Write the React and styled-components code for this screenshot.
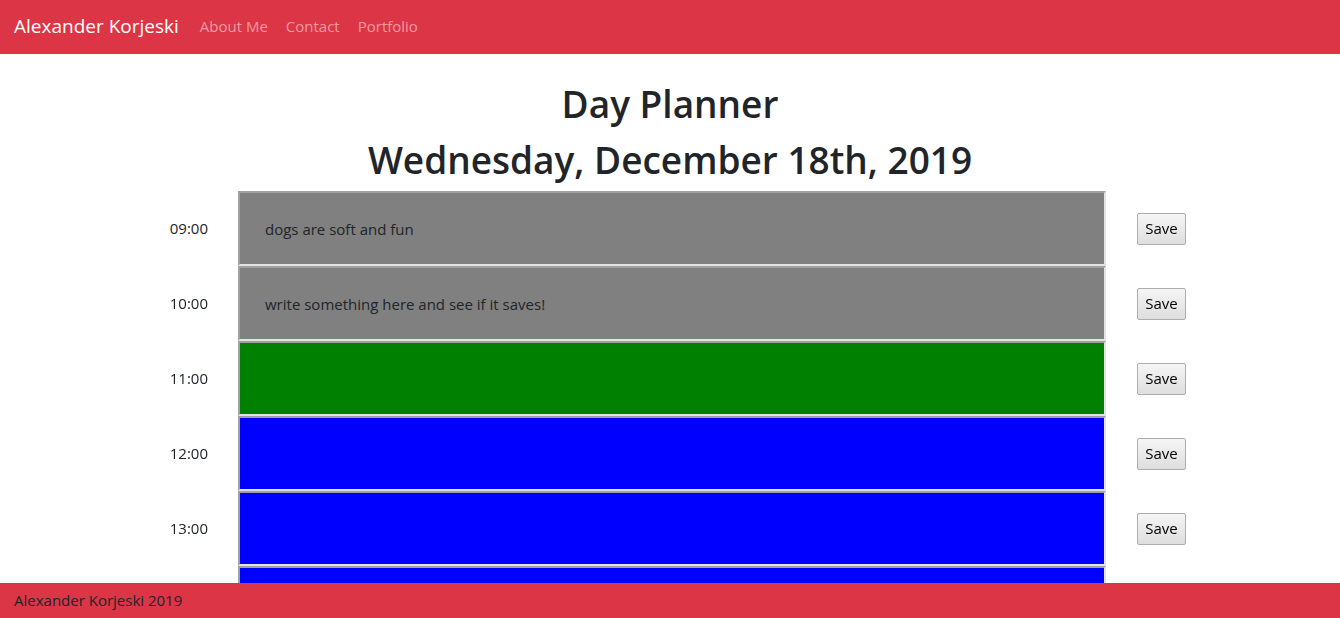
import React from "react";
import styled, { createGlobalStyle } from "styled-components";

const Global = createGlobalStyle`
  html, body { margin: 0; padding: 0; }
  body {
    font-family: "Open Sans", "Noto Sans", sans-serif;
    font-size: 16px;
    line-height: 1.5;
    color: #212529;
    background: #fff;
  }
  * { box-sizing: border-box; }
`;

const NavBar = styled.nav`
  display: flex;
  align-items: center;
  height: 54px;
  padding: 0 14px 2px;
  background: #dc3545;
`;

const Brand = styled.a`
  font-size: 19px;
  color: #fff;
  margin-right: 12px;
  text-decoration: none;
`;

const NavLink = styled.a`
  font-size: 15px;
  color: rgba(255, 255, 255, 0.5);
  padding: 0 9px;
  text-decoration: none;
`;

const Header = styled.header`
  display: flex;
  flex-direction: column;
  align-items: center;
  padding-top: 26px;
`;

const Title = styled.h1`
  margin: 0 0 8px;
  font-size: 37px;
  font-weight: 600;
  line-height: 48px;
  &:last-child { margin-bottom: 7px; }
`;

const Planner = styled.main`
  width: 1140px;
  margin: 0 auto;
  display: flex;
  flex-direction: column;
`;

const Row = styled.div`
  display: grid;
  grid-template-columns: 138px 868px 31px 49px;
  align-items: center;
  height: 75px;
`;

const Hour = styled.div`
  text-align: right;
  padding-right: 30px;
  font-size: 15px;
`;

const Entry = styled.textarea`
  grid-column: 2;
  height: 75px;
  resize: none;
  margin: 0;
  padding: 24px 25px;
  font-family: inherit;
  font-size: 15px;
  line-height: 24px;
  color: #212529;
  background: ${(p) => p.$bg};
  border: 2px solid;
  border-color: #a0a0a0 #e3e3e3 #e3e3e3 #a0a0a0;
  outline: none;
`;

const SaveButton = styled.button`
  grid-column: 4;
  width: 49px;
  height: 32px;
  padding: 0 0 1px;
  font-family: inherit;
  font-size: 15px;
  color: #000;
  background: linear-gradient(#f5f5f5, #dedede);
  border: 1px solid #adadad;
  border-radius: 2px;
`;

const Footer = styled.footer`
  position: fixed;
  left: 0;
  right: 0;
  bottom: 0;
  height: 35px;
  display: flex;
  align-items: center;
  padding: 0 14px;
  background: #dc3545;
  font-size: 15px;
  color: #212529;
`;

const COLORS = { past: "#808080", present: "#008000", future: "#0000ff" };

const hours = [
  { h: "09:00", s: "past", t: "dogs are soft and fun" },
  { h: "10:00", s: "past", t: "write something here and see if it saves!" },
  { h: "11:00", s: "present", t: "" },
  { h: "12:00", s: "future", t: "" },
  { h: "13:00", s: "future", t: "" },
  { h: "14:00", s: "future", t: "" },
  { h: "15:00", s: "future", t: "" },
  { h: "16:00", s: "future", t: "" },
  { h: "17:00", s: "future", t: "" },
];

export default function App() {
  return (
    <>
      <Global />
      <NavBar>
        <Brand href="#">Alexander Korjeski</Brand>
        <NavLink href="#">About Me</NavLink>
        <NavLink href="#">Contact</NavLink>
        <NavLink href="#">Portfolio</NavLink>
      </NavBar>
      <Header>
        <Title>Day Planner</Title>
        <Title>Wednesday, December 18th, 2019</Title>
      </Header>
      <Planner>
        {hours.map((r) => (
          <Row key={r.h}>
            <Hour>{r.h}</Hour>
            <Entry $bg={COLORS[r.s]} defaultValue={r.t} />
            <SaveButton>Save</SaveButton>
          </Row>
        ))}
      </Planner>
      <Footer>Alexander Korjeski 2019</Footer>
    </>
  );
}
